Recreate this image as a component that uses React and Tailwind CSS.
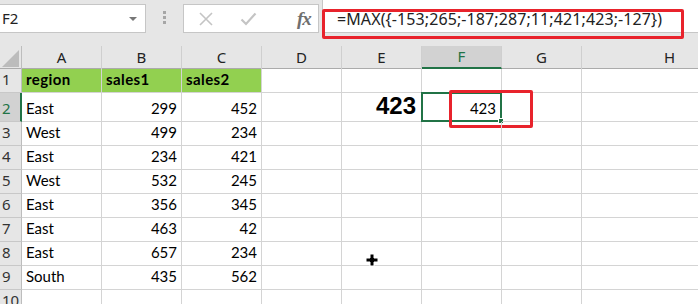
import React from "react";

const columns = ["A", "B", "C", "D", "E", "F", "G"];

const data = [
    ["East", 299, 452],
    ["West", 499, 234],
    ["East", 234, 421],
    ["West", 532, 245],
    ["East", 356, 345],
    ["East", 463, 42],
    ["East", 657, 234],
    ["South", 435, 562],
];

const cellFont = { fontFamily: "Lato, 'Liberation Sans', sans-serif" };
const uiFont = { fontFamily: "'Noto Sans', 'Open Sans', sans-serif" };

function RowHeader({ label, selected }) {
    return (
        <div
            className={`w-[22px] shrink-0 flex items-end pb-[2px] pl-[2px] text-[15px] border-b border-[#c8c8c8] ${
                selected
                    ? "bg-[#d2d2d2] text-[#217346] border-r-2 border-r-[#217346]"
                    : "bg-[#e6e6e6] text-[#333] border-r border-r-[#bdbdbd]"
            }`}
            style={uiFont}
        >
            {label}
        </div>
    );
}

function Cell({ children, align = "left", bold, className = "" }) {
    return (
        <div
            className={`relative w-[80px] shrink-0 flex items-end pb-[2px] px-[4px] text-[15px] text-black border-r border-b border-[#d4d4d4] ${
                align === "right" ? "justify-end" : ""
            } ${bold ? "font-bold tracking-[0.4px]" : ""} ${className}`}
            style={cellFont}
        >
            {children}
        </div>
    );
}

function RestCell({ className = "" }) {
    return <div className={`flex-1 border-b border-[#d4d4d4] ${className}`} />;
}

export default function App() {
    return (
        <div className="relative w-[698px] h-[304px] overflow-hidden bg-white select-none">
            {/* Formula bar */}
            <div className="relative h-[40px] bg-[#e6e6e6] flex">
                <div className="mt-[4px] w-[146px] h-[29px] bg-white border border-[#c6c6c6] border-l-0 flex items-center justify-between pl-[2px] pr-[8px]">
                    <span className="text-[15px] text-[#222]" style={uiFont}>
                        F2
                    </span>
                    <span className="w-0 h-0 border-l-[4px] border-r-[4px] border-t-[4px] border-l-transparent border-r-transparent border-t-[#777]" />
                </div>
                <div className="w-[37px] flex flex-col items-center justify-center gap-[2px] pb-[6px]">
                    <span className="w-[3px] h-[3px] bg-[#a6a6a6]" />
                    <span className="w-[3px] h-[3px] bg-[#a6a6a6]" />
                    <span className="w-[3px] h-[3px] bg-[#a6a6a6]" />
                </div>
                <div className="mt-[4px] w-[136px] h-[29px] bg-white border border-[#c6c6c6] flex items-center pl-[14px] gap-[26px]">
                    <svg width="16" height="14" viewBox="0 0 16 14">
                        <path d="M2 1 L14 13 M14 1 L2 13" stroke="#c4c4c4" strokeWidth="1.6" />
                    </svg>
                    <svg width="17" height="14" viewBox="0 0 17 14">
                        <path d="M1.5 7.5 L6 12 L15.5 1.5" stroke="#c4c4c4" strokeWidth="2.2" fill="none" />
                    </svg>
                    <span
                        className="ml-[14px] text-[19px] italic font-bold text-[#6f6f6f] leading-none tracking-[-1px]"
                        style={{ fontFamily: "'Liberation Serif', serif" }}
                    >
                        fx
                    </span>
                </div>
                <div className="ml-[3px] flex-1 h-[33px] bg-white border-l border-b border-[#c6c6c6] flex items-center pl-[14px] pt-[6px]">
                    <span className="text-[16px] text-[#222] tracking-[0.1px]" style={uiFont}>
                        =MAX({"{"}-153;265;-187;287;11;421;423;-127{"})"}
                    </span>
                </div>
                {/* annotation around formula */}
                <div className="absolute left-[322px] top-[9px] w-[362px] h-[30px] border-[3px] border-[#e8232c] rounded-[2px]" />
            </div>

            {/* Column headers */}
            <div className="flex h-[29px] bg-[#e6e6e6] border-b border-[#ababab]">
                <div className="w-[22px] shrink-0 pt-[6px]">
                    <div className="w-[22px] h-[23px] border-r border-[#bdbdbd] flex items-end justify-end pr-[2px] pb-[2px]">
                        <svg width="17" height="17" viewBox="0 0 17 17">
                            <polygon points="17,0 17,17 0,17" fill="#bcbcbc" />
                        </svg>
                    </div>
                </div>
                {columns.map((c) => (
                    <div key={c} className="w-[80px] shrink-0 pt-[6px]">
                        <div
                            className={`h-[23px] flex items-center justify-center text-[15px] border-r border-[#cfcfcf] ${
                                c === "F"
                                    ? "bg-[#d2d2d2] text-[#217346] border-b-2 border-b-[#217346]"
                                    : "text-[#222]"
                            }`}
                            style={uiFont}
                        >
                            {c}
                        </div>
                    </div>
                ))}
                <div className="flex-1 pt-[6px]">
                    <div className="h-[23px] flex items-center pl-[82px] text-[15px] text-[#222]" style={uiFont}>
                        H
                    </div>
                </div>
            </div>

            {/* Row 1 */}
            <div className="flex h-[24px]">
                <RowHeader label="1" />
                <Cell bold className="bg-[#92d050]">region</Cell>
                <Cell bold className="bg-[#92d050]">sales1</Cell>
                <Cell bold className="bg-[#92d050]">sales2</Cell>
                <Cell />
                <Cell />
                <Cell />
                <Cell />
                <RestCell />
            </div>

            {/* Row 2 */}
            <div className="relative flex h-[29px]">
                <RowHeader label="2" selected />
                <Cell>{data[0][0]}</Cell>
                <Cell align="right">{data[0][1]}</Cell>
                <Cell align="right">{data[0][2]}</Cell>
                <Cell />
                <div
                    className="w-[80px] shrink-0 flex items-end justify-end pr-[5px] pb-[1px] text-[24px] font-bold text-black border-r border-b border-[#d4d4d4] leading-[28px]"
                    style={{ fontFamily: "'Liberation Sans', Arial, sans-serif" }}
                >
                    423
                </div>
                <div className="relative w-[80px] shrink-0 flex items-end justify-end pr-[5px] pb-[2px] text-[15px] border-r border-b border-[#d4d4d4]" style={cellFont}>
                    423
                    <div className="absolute -left-[1px] -top-[1px] w-[81px] h-[30px] border-2 border-[#217346]" />
                    <div className="absolute -right-[3px] -bottom-[3px] w-[6px] h-[6px] bg-[#217346] border border-white" />
                </div>
                <Cell />
                <RestCell />
                {/* annotation around result */}
                <div className="absolute left-[449px] top-[-3px] w-[84px] h-[38px] border-[3px] border-[#e8232c] rounded-[2px]" />
            </div>

            {data.slice(1).map((row, i) => (
                <div key={i} className="flex h-[24px]">
                    <RowHeader label={i + 3} />
                    <Cell>{row[0]}</Cell>
                    <Cell align="right">{row[1]}</Cell>
                    <Cell align="right">{row[2]}</Cell>
                    <Cell />
                    <Cell />
                    <Cell />
                    <Cell />
                    <RestCell />
                </div>
            ))}

            <div className="flex h-[24px]">
                <RowHeader label="10" />
                <Cell />
                <Cell />
                <Cell />
                <Cell />
                <Cell />
                <Cell />
                <Cell />
                <RestCell />
            </div>

            {/* mouse cursor */}
            <svg className="absolute left-[365px] top-[253px]" width="14" height="14" viewBox="0 0 14 14">
                <path d="M5 1 H9 V5 H13 V9 H9 V13 H5 V9 H1 V5 H5 Z" fill="#000" stroke="#fff" strokeWidth="1" />
            </svg>
        </div>
    );
}
